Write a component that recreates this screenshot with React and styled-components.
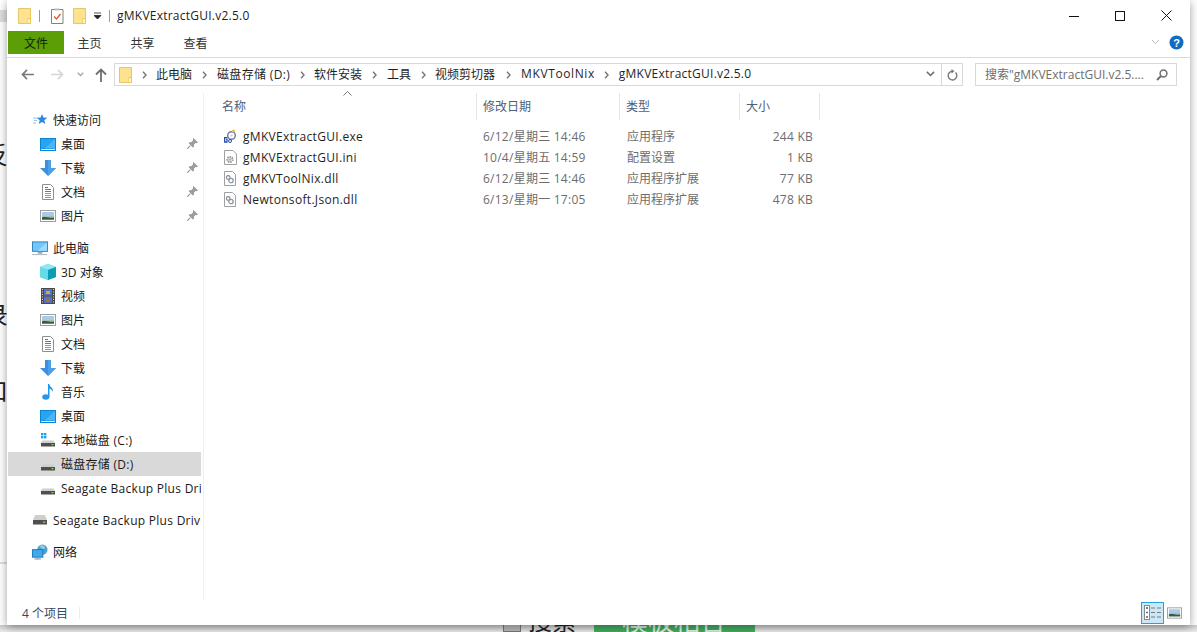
import React from 'react';
import styled, { createGlobalStyle } from 'styled-components';

const Global = createGlobalStyle`
  html, body { margin: 0; padding: 0; background: #fff; }
  body {
    width: 1197px; height: 632px; overflow: hidden; position: relative;
    font-family: "Open Sans", "Noto Sans CJK SC", sans-serif;
    font-size: 12px; color: #1a1a1a;
  }
`;

const Backdrop = styled.div`
  position: absolute; inset: 0; background: #fff; overflow: hidden;
`;
const BackGlyph = styled.span`
  position: absolute; left: ${p => p.$x}px; top: ${p => p.$y}px;
  font-size: ${p => p.$size || 24}px; line-height: 30px; color: ${p => p.$color || '#222'}; white-space: nowrap;
`;
const BackBand = styled.div`
  position: absolute; left: 0; width: 7px; top: ${p => p.$y}px; height: ${p => p.$h}px; background: #dedede;
`;
const BottomStrip = styled.div`
  position: absolute; left: 0; right: 0; top: 625px; height: 7px;
  background: linear-gradient(#c9c9c9, #ececec);
`;
const GreenButton = styled.div`
  position: absolute; left: 594px; top: 620px; width: 161px; height: 12px;
  background: #43ab5f;
`;
const GreyBox = styled.div`
  position: absolute; left: 503px; top: 620px; width: 18px; height: 12px;
  border: 1px solid #777; background: #bbb; box-sizing: border-box;
`;

const Win = styled.div`
  position: absolute; left: 7px; top: 0; width: 1183px; height: 625px;
  background: #fff; display: flex; flex-direction: column;
  box-shadow: 0 2px 9px rgba(0,0,0,.38);
`;

const TitleBar = styled.div`
  height: 31px; display: flex; align-items: center; flex: none;
`;
const QuickTools = styled.div`
  display: flex; align-items: center; padding-left: 11px; height: 100%;
`;
const ToolSep = styled.i`
  width: 1px; height: 12px; background: #9a9a9a; margin: 0 ${p => p.$r}px 0 ${p => p.$l}px;
`;
const ToolSlot = styled.span`
  display: flex; margin-left: ${p => p.$l || 0}px;
`;
const TitleText = styled.div`
  font-size: 12px; color: #222; letter-spacing: .24px;
`;
const WinButtons = styled.div`
  margin-left: auto; display: flex; height: 100%; margin-right: 1px;
`;
const WinButton = styled.div`
  width: 46px; display: flex; align-items: center; justify-content: center;
`;

const Tabs = styled.div`
  height: 26px; flex: none; display: flex; align-items: flex-start;
  padding: 0 1px; border-bottom: 1px solid #dadada;
`;
const FileTab = styled.div`
  width: 56px; height: 23px; background: #5c9e06; color: #10240a; margin-right: -1px;
  display: flex; align-items: center; justify-content: center; font-size: 12px;
`;
const Tab = styled.div`
  width: 53px; height: 23px; display: flex; align-items: center; justify-content: center; color: #333;
`;
const TabsRight = styled.div`
  margin-left: auto; display: flex; align-items: center; gap: 9px; height: 23px; padding-right: 5px;
`;

const NavBar = styled.div`
  height: 33px; flex: none; display: flex; align-items: center; box-sizing: border-box;
`;
const NavArrows = styled.div`
  width: 107px; display: flex; align-items: center; flex: none; padding-left: 13px; box-sizing: border-box;
`;
const ArrowSlot = styled.div`
  width: ${p => p.$w}px; margin-left: ${p => p.$l || 0}px; display: flex; justify-content: center; flex: none;
`;
const AddressBox = styled.div`
  width: 849px; height: 23px; border: 1px solid #d9d9d9; box-sizing: border-box; display: flex; align-items: center; flex: none;
`;
const Crumbs = styled.div`
  display: flex; align-items: center; padding-left: 4px; flex: 1;
`;
const Crumb = styled.span`
  color: #1f1f1f; white-space: nowrap; letter-spacing: ${p => p.$spacing || 0}px; padding-bottom: 2px;
`;
const CrumbSep = styled.span`
  width: ${p => p.$w || 25}px; display: flex; justify-content: center; flex: none;
`;
const AddressEnd = styled.div`
  display: flex; align-items: center; height: 100%;
`;
const RefreshBox = styled.div`
  width: 20px; height: 100%; border-left: 1px solid #d9d9d9; display: flex; align-items: center; justify-content: center;
  color: #777; margin-left: 6px;
`;
const SearchBox = styled.div`
  width: 202px; height: 23px; margin-left: 12px; border: 1px solid #d9d9d9; box-sizing: border-box; white-space: nowrap;
  display: flex; align-items: center; justify-content: space-between; padding: 0 8px 0 9px; color: #6d6d6d; flex: none;
`;
const SearchText = styled.span`
  padding-bottom: 2px;
`;

const Main = styled.div`
  flex: 1; display: flex; min-height: 0; padding-top: 1px;
`;
const Side = styled.div`
  width: 197px; flex: none; border-right: 1px solid #f0f0f0; overflow: hidden; padding-top: 15px; box-sizing: border-box;
  margin-top: 1px;
`;
const SideRow = styled.div`
  height: 24px; margin-left: 1px; width: 193px; display: flex; align-items: center; white-space: nowrap; overflow: hidden;
  padding-left: ${p => (p.$top ? 24 : 32)}px; box-sizing: border-box; position: relative;
  margin-top: ${p => p.$gap || 0}px;
  background: ${p => (p.$active ? '#d9d9d9' : 'transparent')};
  letter-spacing: ${p => (p.$latin ? '.28px' : '0')};
`;
const IconSlot = styled.span`
  width: 16px; flex: none; display: flex; align-items: center; justify-content: center; margin-right: 5px;
`;
const Pin = styled.span`
  position: absolute; left: 179px; top: 6px; display: flex;
`;

const ListPane = styled.div`
  flex: 1; padding-left: 12px; padding-top: 1px;
`;
const HeaderRow = styled.div`
  display: flex; height: 27px; align-items: center; position: relative;
`;
const HeaderCell = styled.div`
  width: ${p => p.$w}px; height: 100%; box-sizing: border-box; padding-left: 6px; padding-bottom: 1px;
  border-right: 1px solid #e5e5e5; display: flex; align-items: center; color: #4c607a;
`;
const SortCaret = styled.span`
  position: absolute; left: 127px; top: -2px; display: flex;
`;
const FileRows = styled.div`
  margin-top: 6px;
`;
const FileRow = styled.div`
  display: flex; height: 21px; align-items: center;
`;
const NameCell = styled.div`
  width: 261px; padding-left: 6px; box-sizing: border-box; display: flex; align-items: center; color: #1f1f1f; letter-spacing: .32px;
`;
const FileIcon = styled.span`
  width: 16px; flex: none; display: flex; justify-content: center; margin-right: 5px;
`;
const Cell = styled.div`
  width: ${p => p.$w}px; box-sizing: border-box; padding-left: ${p => p.$pad || 0}px; color: #6d6d6d; white-space: nowrap;
  padding-bottom: ${p => (p.$cjk ? 2 : 0)}px;
  text-align: ${p => (p.$right ? 'right' : 'left')};
  letter-spacing: ${p => (p.$latin ? '.25px' : '0')};
`;

const StatusBar = styled.div`
  height: 25px; flex: none; display: flex; align-items: center; padding-left: 15px; color: #3a4a60; position: relative;
`;
const StatusSep = styled.i`
  width: 1px; height: 12px; background: #ececec; margin-left: 11px;
`;
const ViewButtons = styled.div`
  margin-left: auto; margin-right: 8px; display: flex; align-items: center; gap: 3px;
`;
const ViewActive = styled.div`
  width: 23px; height: 22px; border: 1px solid #26a0da; background: #cbe8f6; box-sizing: border-box;
  display: flex; align-items: center; justify-content: center;
`;
const ViewPlain = styled.div`
  width: 15px; height: 22px; display: flex; align-items: center; justify-content: center;
`;

const Folder = () => (
  <svg width="13" height="16" viewBox="0 0 13 16">
    <path d="M.5.5h12v15H.5z" fill="#fde28f" stroke="#e8c766" />
    <rect x="9.5" y="10" width="3.5" height="6" fill="#f1c64e" />
    <rect x="10" y="11" width="2" height="4" fill="#fff2c4" />
  </svg>
);

const Clipboard = () => (
  <svg width="13" height="16" viewBox="0 0 13 16">
    <path d="M.5 1.5h11.5v14H.5z" fill="#fff" stroke="#808080" />
    <path d="M3.5.5h5v2h-5z" fill="#bbb" />
    <path d="M3 8.5l2.5 2.5 4-5" fill="none" stroke="#e2592c" strokeWidth="1.4" />
  </svg>
);

const BackArrow = ({ color, flip }) => (
  <svg width="13" height="11" viewBox="0 0 14 12" style={flip ? { transform: 'scaleX(-1)' } : undefined}>
    <path d="M6.5 1L1.5 6l5 5M2 6h12" fill="none" stroke={color} strokeWidth="1.8" />
  </svg>
);
const UpArrow = () => (
  <svg width="12" height="14" viewBox="0 0 12 14">
    <path d="M1 6.5L6 1.5l5 5M6 2v12" fill="none" stroke="#6f6f6f" strokeWidth="1.8" />
  </svg>
);
const Chevron = ({ color = '#8a8a8a', w = 7, sw = 1.5 }) => (
  <svg width={w} height={w * 0.7} viewBox="0 0 10 7">
    <path d="M1 1l4 4 4-4" fill="none" stroke={color} strokeWidth={sw * 1.3} />
  </svg>
);
const CrumbArrow = () => (
  <svg width="5" height="8" viewBox="0 0 5 8">
    <path d="M1 .8L4 4 1 7.2" fill="none" stroke="#777" strokeWidth="1.4" />
  </svg>
);

const Star = () => (
  <svg width="15" height="14" viewBox="0 0 15 14">
    <path d="M9 1l1.4 3.6 3.9.2-3 2.5 1 3.8L9 9.1l-3.3 2 1-3.8-3-2.5 3.9-.2z" fill="#2f87dc" />
    <path d="M0 5h4M1 7.5h3M0 10h3" stroke="#8cc3ef" strokeWidth="1" />
  </svg>
);
const Desktop = () => (
  <svg width="16" height="13" viewBox="0 0 16 13">
    <rect width="16" height="13" fill="#0a84d8" />
    <path d="M1 1h14v9.5H1z" fill="#2aa4f0" />
    <path d="M15 1v9.5H5z" fill="#47b7f7" />
    <rect x="1" y="11" width="14" height="1" fill="#dff1fc" />
  </svg>
);
const Down = () => (
  <svg width="16" height="16" viewBox="0 0 16 16">
    <path d="M5 0h6v8h5l-8 8-8-8h5z" fill="#3d8fdf" />
    <path d="M8 0h3v8h5l-8 8z" fill="#4ba0ea" />
  </svg>
);
const Doc = () => (
  <svg width="12" height="16" viewBox="0 0 12 16">
    <path d="M.5.5h8l3 3v12H.5z" fill="#fff" stroke="#8f8f8f" />
    <path d="M3 3.5h3M3 5.5h6M3 7.5h6" stroke="#2f86d2" strokeWidth="1" />
    <path d="M3 9.5h6M3 11.5h6M3 13.5h6" stroke="#8d9aa5" strokeWidth="1" />
  </svg>
);
const Pics = () => (
  <svg width="16" height="12" viewBox="0 0 16 12">
    <rect x=".5" y=".5" width="15" height="11" fill="#fff" stroke="#9f9f9f" />
    <rect x="2" y="2" width="12" height="4" fill="#a8cbe8" />
    <rect x="2" y="6" width="12" height="4" fill="#a9bdb0" />
    <path d="M2 7.5c3-1.5 6 1 12 0V9.5H2z" fill="#33594a" />
  </svg>
);
const Pc = () => (
  <svg width="17" height="15" viewBox="0 0 17 15">
    <rect x=".5" y=".5" width="16" height="10" fill="#6fc8fb" stroke="#2f7fae" />
    <path d="M16 1v9H6z" fill="#9ddcff" />
    <rect x="6" y="11" width="5" height="2" fill="#9aa7ae" />
    <rect y="13.5" width="16" height="1" fill="#a9b4ba" />
  </svg>
);
const Cube = () => (
  <svg width="16" height="16" viewBox="0 0 16 16">
    <path d="M8 0l8 3v10l-8 3-8-3V3z" fill="#2fc3d6" />
    <path d="M8 0l8 3-8 3-8-3z" fill="#8fe8f2" />
    <path d="M0 3l8 3v10l-8-3z" fill="#63dbe8" />
    <path d="M8 6l8-3v10l-8 3z" fill="#0d9cb5" />
  </svg>
);
const Film = () => (
  <svg width="14" height="16" viewBox="0 0 14 16">
    <rect width="14" height="16" fill="#4a4a4a" />
    <rect x="3" y="1" width="8" height="6.5" fill="#4f76c6" />
    <rect x="3" y="8.5" width="8" height="6.5" fill="#4f76c6" />
    <rect x="5" y="3" width="4" height="3" fill="#d9a53a" />
    <rect x="5" y="10.5" width="4" height="3" fill="#c9603a" />
    <path d="M1.5 1v14M12.5 1v14" stroke="#ddd" strokeWidth="1" strokeDasharray="1 1.5" />
  </svg>
);
const Music = () => (
  <svg width="12" height="16" viewBox="0 0 12 16">
    <ellipse cx="3.8" cy="13" rx="3.6" ry="2.8" fill="#2796ea" />
    <path d="M6 0h1.3c.2 3 4.6 3.6 3.4 8-.4-2-2-3-3.2-3.2V13H6z" fill="#2796ea" />
  </svg>
);
const Drive = ({ win }) => (
  <svg width="14" height="14" viewBox="0 0 14 14">
    {win && (
      <g fill="#22a0ea">
        <rect x="0" y="0" width="2.4" height="2.4" />
        <rect x="3" y="0" width="2.4" height="2.4" />
        <rect x="0" y="3" width="2.4" height="2.4" />
        <rect x="3" y="3" width="2.4" height="2.4" />
      </g>
    )}
    <path d="M1.5 7.5h11l1.5 2.5H0z" fill="#cfcfcf" />
    <rect y="10" width="14" height="3.5" fill="#4f4f4f" />
    <rect x="10.5" y="11" width="2" height="1.2" fill="#7fd25a" />
  </svg>
);
const BigDrive = () => (
  <svg width="14" height="10" viewBox="0 0 14 10">
    <path d="M2 0h10l2 5H0z" fill="#cfcfcf" />
    <rect y="5" width="14" height="4.5" fill="#4f4f4f" />
    <rect x="10" y="6.5" width="2.4" height="1.3" fill="#7fd25a" />
  </svg>
);
const Network = () => (
  <svg width="17" height="16" viewBox="0 0 17 16">
    <circle cx="11" cy="5.5" r="5.5" fill="#4fa0c8" />
    <path d="M8 2c2-2 6-1 6 2-2 2-5 0-6-2z" fill="#8dcbe6" />
    <rect x=".5" y="5.5" width="11" height="8" fill="#3fa9ee" stroke="#1f77b8" />
    <rect x="4" y="13.5" width="4" height="1.5" fill="#8a9aa5" />
    <rect x="2.5" y="15" width="7" height="1" fill="#8a9aa5" />
  </svg>
);
const PinIcon = () => (
  <svg width="11" height="11" viewBox="0 0 11 11">
    <path d="M6.5 0L11 4.5 9.8 5.2 8.7 4.8 6.8 7 6.9 8.8 5.8 9.5 1.7 5.2 2.4 4.3 4.2 4.2 6.2 2.2 5.8 1.1z" fill="#9b9b9b" />
    <path d="M3.3 7.6L.3 10.7" stroke="#9b9b9b" strokeWidth="1.2" />
  </svg>
);
const ExeIcon = () => (
  <svg width="15" height="15" viewBox="0 0 15 15">
    <circle cx="8.5" cy="6.5" r="3.8" fill="#fff" stroke="#6a78a8" strokeWidth="1.4" />
    <circle cx="8.5" cy="6.5" r="1.3" fill="#cfd6e6" />
    <circle cx="10.5" cy="2" r="1.6" fill="#e8c23a" />
    <path d="M1 8h3.5v1.2H2.2v3H3.4v-1.4H2.8v-1H4.6v4H1z" fill="#2a4fa8" />
    <circle cx="7" cy="12" r="1.5" fill="none" stroke="#2a4fa8" />
  </svg>
);
const IniIcon = () => (
  <svg width="13" height="15" viewBox="0 0 13 15">
    <path d="M.5.5h8.5l3.5 3.5v10.5H.5z" fill="#fff" stroke="#a0a0a0" />
    <circle cx="6" cy="9.5" r="2.6" fill="none" stroke="#8f8f8f" strokeWidth="2" strokeDasharray="1.4 .9" />
    <circle cx="6" cy="9.5" r="1.2" fill="#b5b5b5" />
  </svg>
);
const DllIcon = () => (
  <svg width="12" height="15" viewBox="0 0 12 15">
    <path d="M.5.5h8l3 3v11H.5z" fill="#fff" stroke="#a0a0a0" />
    <circle cx="4.2" cy="6.5" r="1.8" fill="none" stroke="#8a8a8a" strokeWidth="1.2" />
    <circle cx="7" cy="9.5" r="2.2" fill="none" stroke="#8a9aa8" strokeWidth="1.3" />
  </svg>
);

const sideItems = [
  { label: '快速访问', icon: <Star />, top: true },
  { label: '桌面', icon: <Desktop />, pin: true },
  { label: '下载', icon: <Down />, pin: true },
  { label: '文档', icon: <Doc />, pin: true },
  { label: '图片', icon: <Pics />, pin: true },
  { label: '此电脑', icon: <Pc />, top: true, gap: 8 },
  { label: '3D 对象', icon: <Cube /> },
  { label: '视频', icon: <Film /> },
  { label: '图片', icon: <Pics /> },
  { label: '文档', icon: <Doc /> },
  { label: '下载', icon: <Down /> },
  { label: '音乐', icon: <Music /> },
  { label: '桌面', icon: <Desktop /> },
  { label: '本地磁盘 (C:)', icon: <Drive win />, latin: true },
  { label: '磁盘存储 (D:)', icon: <Drive />, active: true, latin: true },
  { label: 'Seagate Backup Plus Drive (E:)', icon: <Drive />, latin: true },
  { label: 'Seagate Backup Plus Drive (E:)', icon: <BigDrive />, top: true, gap: 8, latin: true },
  { label: '网络', icon: <Network />, top: true, gap: 8 },
];

const crumbs = [
  { text: '此电脑' },
  { text: '磁盘存储 (D:)', spacing: 0.33, sep: 24 },
  { text: '软件安装' },
  { text: '工具', sep: 24 },
  { text: '视频剪切器', sep: 26 },
  { text: 'MKVToolNix', spacing: 0.6, sep: 24 },
  { text: 'gMKVExtractGUI.v2.5.0', spacing: 0.24, last: true },
];

const files = [
  { name: 'gMKVExtractGUI.exe', icon: <ExeIcon />, date: '6/12/星期三 14:46', type: '应用程序', size: '244 KB' },
  { name: 'gMKVExtractGUI.ini', icon: <IniIcon />, date: '10/4/星期五 14:59', type: '配置设置', size: '1 KB' },
  { name: 'gMKVToolNix.dll', icon: <DllIcon />, date: '6/12/星期三 14:46', type: '应用程序扩展', size: '77 KB' },
  { name: 'Newtonsoft.Json.dll', icon: <DllIcon />, date: '6/13/星期一 17:05', type: '应用程序扩展', size: '478 KB' },
];

const App = () => (
  <>
    <Global />
    <Backdrop>
      <BackBand $y={10} $h={12} />
      <BackBand $y={562} $h={2} />
      <BackGlyph $x={-16} $y={140}>反</BackGlyph>
      <BackGlyph $x={-16} $y={300}>录</BackGlyph>
      <BackGlyph $x={-16} $y={376}>口</BackGlyph>
      <BottomStrip />
      <GreyBox />
      <BackGlyph $x={528} $y={606}>搜索</BackGlyph>
      <GreenButton />
      <BackGlyph $x={622} $y={606} $size={26} $color="#dff2e5">模板相合</BackGlyph>
    </Backdrop>
    <Win>
      <TitleBar>
        <QuickTools>
          <Folder />
          <ToolSep $l={8} $r={11} />
          <Clipboard />
          <ToolSlot $l={9}><Folder /></ToolSlot>
          <ToolSlot $l={8}>
            <svg width="8" height="8" viewBox="0 0 8 8">
              <path d="M0 1h7M0 3.5h7L3.5 7z" stroke="#222" fill="#222" strokeWidth=".8" />
            </svg>
          </ToolSlot>
          <ToolSep $l={7} $r={7} />
        </QuickTools>
        <TitleText>gMKVExtractGUI.v2.5.0</TitleText>
        <WinButtons>
          <WinButton>
            <svg width="10" height="10" viewBox="0 0 10 10"><path d="M0 5.5h10" stroke="#111" /></svg>
          </WinButton>
          <WinButton>
            <svg width="10" height="10" viewBox="0 0 10 10"><rect x=".5" y=".5" width="9" height="9" fill="none" stroke="#111" /></svg>
          </WinButton>
          <WinButton>
            <svg width="11" height="11" viewBox="0 0 11 11"><path d="M.5.5l10 10M10.5.5l-10 10" stroke="#111" /></svg>
          </WinButton>
        </WinButtons>
      </TitleBar>
      <Tabs>
        <FileTab>文件</FileTab>
        <Tab>主页</Tab>
        <Tab>共享</Tab>
        <Tab>查看</Tab>
        <TabsRight>
          <Chevron color="#b8b8b8" w={9} sw={0.8} />
          <svg width="15" height="15" viewBox="0 0 15 15">
            <circle cx="7.5" cy="7.5" r="7" fill="#0f6cc4" />
            <text x="7.5" y="11.5" textAnchor="middle" fontSize="11" fontWeight="700" fill="#fff" fontFamily="Liberation Sans">?</text>
          </svg>
        </TabsRight>
      </Tabs>
      <NavBar>
        <NavArrows>
          <ArrowSlot $w={14}><BackArrow color="#7a7a7a" /></ArrowSlot>
          <ArrowSlot $w={14} $l={16}><BackArrow color="#d6d6d6" flip /></ArrowSlot>
          <ArrowSlot $w={8} $l={12}><Chevron color="#a8a8a8" /></ArrowSlot>
          <ArrowSlot $w={13} $l={10}><UpArrow /></ArrowSlot>
        </NavArrows>
        <AddressBox>
          <Crumbs>
            <Folder />
            <CrumbSep $w={24}><CrumbArrow /></CrumbSep>
            {crumbs.map(c => (
              <React.Fragment key={c.text}>
                <Crumb $spacing={c.spacing}>{c.text}</Crumb>
                {!c.last && <CrumbSep $w={c.sep}><CrumbArrow /></CrumbSep>}
              </React.Fragment>
            ))}
          </Crumbs>
          <AddressEnd>
            <Chevron color="#6e6e6e" w={9} sw={1.3} />
            <RefreshBox>
              <svg width="11" height="12" viewBox="0 0 11 12">
                <path d="M8.5 3.5a4.3 4.3 0 1 1-3-1.2" fill="none" stroke="#7a7a7a" strokeWidth="1.4" />
                <path d="M4.5 0v4.5L7.5 2.2z" fill="#7a7a7a" />
              </svg>
            </RefreshBox>
          </AddressEnd>
        </AddressBox>
        <SearchBox>
          <SearchText>搜索"gMKVExtractGUI.v2.5....</SearchText>
          <svg width="12" height="12" viewBox="0 0 12 12">
            <circle cx="7.5" cy="4.5" r="3.4" fill="none" stroke="#6f6f6f" strokeWidth="1.5" />
            <path d="M5 7L1 11" stroke="#6f6f6f" strokeWidth="2" />
          </svg>
        </SearchBox>
      </NavBar>
      <Main>
        <Side>
          {sideItems.map((item, i) => (
            <SideRow key={i} $top={item.top} $gap={item.gap} $active={item.active} $latin={item.latin}>
              <IconSlot>{item.icon}</IconSlot>
              {item.label}
              {item.pin && <Pin><PinIcon /></Pin>}
            </SideRow>
          ))}
        </Side>
        <ListPane>
          <HeaderRow>
            <SortCaret>
              <svg width="9" height="5" viewBox="0 0 9 5"><path d="M.5 4.5l4-4 4 4" fill="none" stroke="#777" /></svg>
            </SortCaret>
            <HeaderCell $w={261}>名称</HeaderCell>
            <HeaderCell $w={143}>修改日期</HeaderCell>
            <HeaderCell $w={120}>类型</HeaderCell>
            <HeaderCell $w={80}>大小</HeaderCell>
          </HeaderRow>
          <FileRows>
            {files.map(f => (
              <FileRow key={f.name}>
                <NameCell>
                  <FileIcon>{f.icon}</FileIcon>
                  {f.name}
                </NameCell>
                <Cell $w={143} $pad={6} $latin $cjk>{f.date}</Cell>
                <Cell $w={120} $pad={7} $cjk>{f.type}</Cell>
                <Cell $w={73} $right $latin>{f.size}</Cell>
              </FileRow>
            ))}
          </FileRows>
        </ListPane>
      </Main>
      <StatusBar>
        4 个项目
        <StatusSep />
        <ViewButtons>
          <ViewActive>
            <svg width="17" height="15" viewBox="0 0 17 15">
              <rect x=".5" y=".5" width="5" height="14" fill="#fff" stroke="#8a8a8a" />
              <path d="M2 3h2" stroke="#555" strokeWidth="1.4" />
              <path d="M2 7.5h2" stroke="#2c7fc0" strokeWidth="1.4" />
              <path d="M2 12h2" stroke="#c0392b" strokeWidth="1.4" />
              <path d="M7 3h4M13 3h4M7 7.5h4M13 7.5h4M7 12h4M13 12h4" stroke="#7a7a7a" />
            </svg>
          </ViewActive>
          <ViewPlain><Pics /></ViewPlain>
        </ViewButtons>
      </StatusBar>
    </Win>
  </>
);

export default App;
